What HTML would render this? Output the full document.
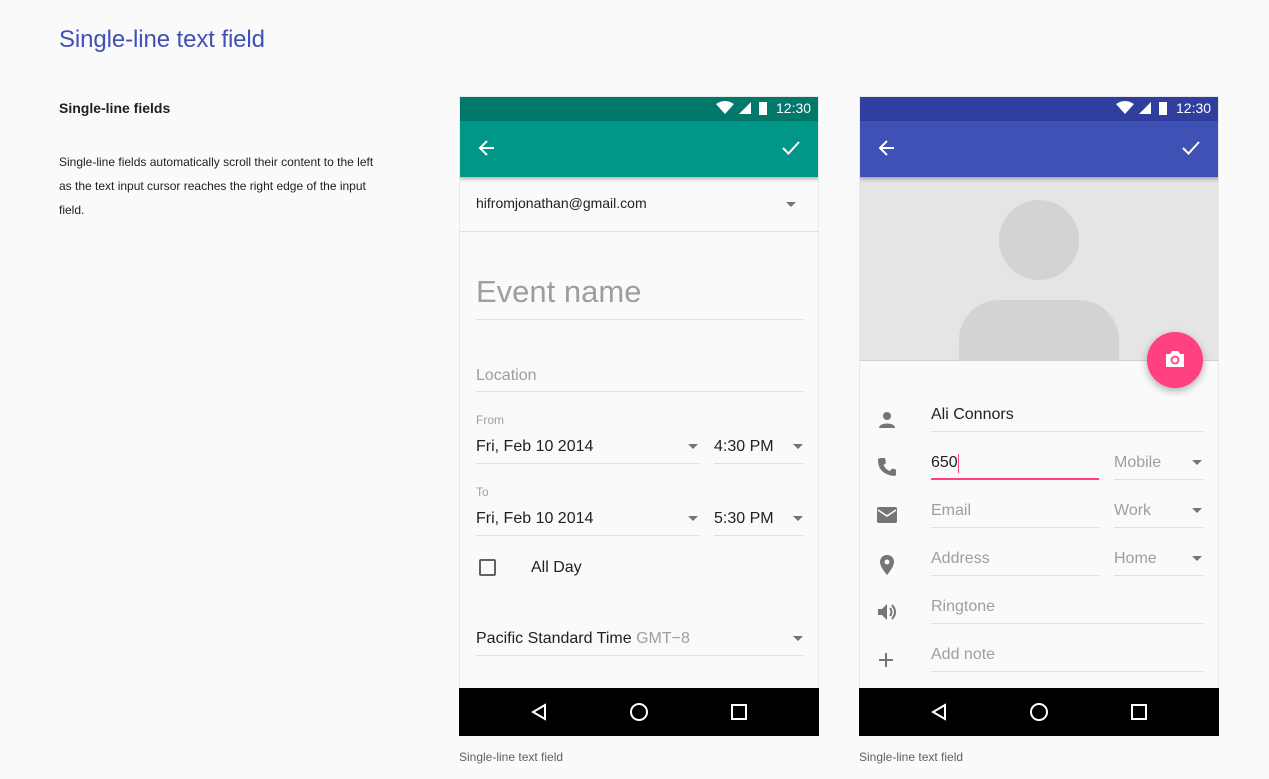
<!DOCTYPE html><html><head><meta charset="utf-8"><style>
*{margin:0;padding:0;box-sizing:border-box}
body{width:1269px;height:779px;background:#fafafa;font-family:"Liberation Sans",Roboto,sans-serif;position:relative;overflow:hidden}
.a{position:absolute}
.t{position:absolute;white-space:nowrap}
.ln{position:absolute;height:1px;background:#e0e0e0}
.g{color:#9e9e9e}
.k{color:#212121}
.dd{position:absolute;width:0;height:0;border-left:5px solid transparent;border-right:5px solid transparent;border-top:5px solid #757575}
</style></head><body>
<div class="t" style="left:59px;top:26px;font-size:24px;color:#3f51b5;letter-spacing:-0.1px">Single-line text field</div>
<div class="t" style="left:59px;top:100px;font-size:14px;font-weight:bold;color:#212121">Single-line fields</div>
<div class="a" style="left:59px;top:150px;width:330px;font-size:12px;line-height:24px;color:#212121">Single-line fields automatically scroll their content to the left as the text input cursor reaches the right edge of the input field.</div>

<div class="a" style="left:459px;top:96px;width:360px;height:640px;background:#fafafa;border:1px solid #e8e8e8;overflow:hidden">
<div class="a" style="left:-1px;top:-1px;width:362px;height:25px;background:#00796b"></div>
<div class="a" style="left:-1px;top:24px;width:362px;height:56px;background:#009688;box-shadow:0 2px 4px rgba(0,0,0,.3)"></div>
</div>
<div class="a" style="left:859px;top:96px;width:360px;height:640px;background:#fafafa;border:1px solid #e8e8e8;overflow:hidden">
<div class="a" style="left:-1px;top:-1px;width:362px;height:25px;background:#303f9f"></div>
<div class="a" style="left:-1px;top:80px;width:362px;height:184px;background:#e5e5e5;border-bottom:1px solid #d0d0d0"></div>
<div class="a" style="left:139px;top:103px;width:80px;height:80px;border-radius:50%;background:#d3d3d3"></div>
<div class="a" style="left:99px;top:203px;width:160px;height:80px;border-radius:40px 40px 0 0;background:#d3d3d3"></div>
<div class="a" style="left:-1px;top:264px;width:362px;height:330px;background:#fafafa"></div>
<div class="a" style="left:-1px;top:24px;width:362px;height:56px;background:#3f51b5;box-shadow:0 2px 4px rgba(0,0,0,.3)"></div>
</div>

<svg class="a" style="left:715px;top:100px" width="60" height="16"><path d="M1 4 Q10 -2 19 4 L10 14Z" fill="#fff"/><path d="M36 2 V14 H24Z" fill="#fff"/><rect x="44" y="2" width="8" height="13" fill="#fff"/></svg>
<div class="t" style="left:776px;top:100px;font-size:14px;color:#fff">12:30</div>
<svg class="a" style="left:1115px;top:100px" width="60" height="16"><path d="M1 4 Q10 -2 19 4 L10 14Z" fill="#fff"/><path d="M36 2 V14 H24Z" fill="#fff"/><rect x="44" y="2" width="8" height="13" fill="#fff"/></svg>
<div class="t" style="left:1176px;top:100px;font-size:14px;color:#fff">12:30</div>
<svg class="a" style="left:477px;top:138px" width="20" height="20"><path d="M17 10H3M10 3L3 10L10 17" stroke="#fff" stroke-width="2" fill="none"/></svg>
<svg class="a" style="left:781px;top:138px" width="20" height="20"><path d="M2 10L7.5 15.5L18 4" stroke="#fff" stroke-width="2" fill="none"/></svg>
<svg class="a" style="left:877px;top:138px" width="20" height="20"><path d="M17 10H3M10 3L3 10L10 17" stroke="#fff" stroke-width="2" fill="none"/></svg>
<svg class="a" style="left:1181px;top:138px" width="20" height="20"><path d="M2 10L7.5 15.5L18 4" stroke="#fff" stroke-width="2" fill="none"/></svg>

<div class="t k" style="left:476px;top:195px;font-size:14px">hifromjonathan@gmail.com</div>
<div class="dd" style="left:786px;top:202px"></div>
<div class="ln" style="left:460px;top:231px;width:358px"></div>
<div class="t" style="left:476px;top:274px;font-size:31px;color:#9e9e9e">Event name</div>
<div class="ln" style="left:476px;top:319px;width:327px"></div>
<div class="t g" style="left:476px;top:367px;font-size:16px">Location</div>
<div class="ln" style="left:476px;top:391px;width:327px"></div>
<div class="t g" style="left:476px;top:413px;font-size:12px">From</div>
<div class="t k" style="left:476px;top:438px;font-size:16px">Fri, Feb 10 2014</div>
<div class="dd" style="left:688px;top:444px"></div>
<div class="ln" style="left:476px;top:463px;width:223px"></div>
<div class="t k" style="left:714px;top:438px;font-size:16px">4:30 PM</div>
<div class="dd" style="left:793px;top:444px"></div>
<div class="ln" style="left:714px;top:463px;width:89px"></div>
<div class="t g" style="left:476px;top:485px;font-size:12px">To</div>
<div class="t k" style="left:476px;top:510px;font-size:16px">Fri, Feb 10 2014</div>
<div class="dd" style="left:688px;top:516px"></div>
<div class="ln" style="left:476px;top:535px;width:223px"></div>
<div class="t k" style="left:714px;top:510px;font-size:16px">5:30 PM</div>
<div class="dd" style="left:793px;top:516px"></div>
<div class="ln" style="left:714px;top:535px;width:89px"></div>
<div class="a" style="left:479px;top:559px;width:17px;height:17px;border:2px solid #616161;border-radius:2px"></div>
<div class="t k" style="left:531px;top:559px;font-size:16px">All Day</div>
<div class="t k" style="left:476px;top:630px;font-size:16px">Pacific Standard Time <span class="g">GMT−8</span></div>
<div class="dd" style="left:793px;top:636px"></div>
<div class="ln" style="left:476px;top:655px;width:327px"></div>

<div class="a" style="left:1147px;top:332px;width:56px;height:56px;border-radius:50%;background:#ff4081;box-shadow:0 3px 8px rgba(0,0,0,.3)"></div>
<svg class="a" style="left:1165px;top:350px" width="20" height="18"><path d="M1 4H5L7 1H13L15 4H19V17H1Z" fill="#fff"/><circle cx="10" cy="10" r="3.5" fill="none" stroke="#ff4081" stroke-width="1.8"/></svg>
<svg class="a" style="left:877px;top:410px" width="20" height="20"><circle cx="10" cy="6" r="4" fill="#757575"/><path d="M2 18C2 12 18 12 18 18Z" fill="#757575"/></svg>
<div class="t k" style="left:931px;top:406px;font-size:16px">Ali Connors</div>
<div class="ln" style="left:931px;top:431px;width:272px"></div>
<svg class="a" style="left:877px;top:457px" width="20" height="20"><path d="M4 1L8 1L9 6L6.5 8Q9 13 13 14L15 11.5L19 12.5V17Q19 19 17 19Q1 17 1 3Q1 1 4 1Z" fill="#757575"/></svg>
<div class="t k" style="left:931px;top:454px;font-size:16px">650</div>
<div class="a" style="left:958px;top:454px;width:1px;height:19px;background:#ff4081"></div>
<div class="a" style="left:931px;top:478px;width:168px;height:2px;background:#ff4081"></div>
<div class="t g" style="left:1114px;top:454px;font-size:16px">Mobile</div>
<div class="dd" style="left:1192px;top:460px"></div>
<div class="ln" style="left:1114px;top:479px;width:89px"></div>
<svg class="a" style="left:876px;top:506px" width="22" height="18"><rect x="1" y="1" width="20" height="16" rx="2" fill="#757575"/><path d="M2 4L11 10L20 4" stroke="#fafafa" stroke-width="1.6" fill="none"/></svg>
<div class="t g" style="left:931px;top:502px;font-size:16px">Email</div>
<div class="ln" style="left:931px;top:527px;width:168px"></div>
<div class="t g" style="left:1114px;top:502px;font-size:16px">Work</div>
<div class="dd" style="left:1192px;top:508px"></div>
<div class="ln" style="left:1114px;top:527px;width:89px"></div>
<svg class="a" style="left:879px;top:554px" width="16" height="22"><path d="M8 1C4 1 1 4 1 8C1 13 8 21 8 21C8 21 15 13 15 8C15 4 12 1 8 1Z" fill="#757575"/><circle cx="8" cy="8" r="2.5" fill="#fafafa"/></svg>
<div class="t g" style="left:931px;top:550px;font-size:16px">Address</div>
<div class="ln" style="left:931px;top:575px;width:168px"></div>
<div class="t g" style="left:1114px;top:550px;font-size:16px">Home</div>
<div class="dd" style="left:1192px;top:556px"></div>
<div class="ln" style="left:1114px;top:575px;width:89px"></div>
<svg class="a" style="left:877px;top:603px" width="22" height="18"><path d="M1 6H5L10 1V17L5 12H1Z" fill="#757575"/><path d="M13 5Q16 9 13 13M15 2Q21 9 15 16" stroke="#757575" stroke-width="2" fill="none"/></svg>
<div class="t g" style="left:931px;top:598px;font-size:16px">Ringtone</div>
<div class="ln" style="left:931px;top:623px;width:272px"></div>
<svg class="a" style="left:878px;top:652px" width="16" height="16"><path d="M8 1V15M1 8H15" stroke="#757575" stroke-width="2"/></svg>
<div class="t g" style="left:931px;top:646px;font-size:16px">Add note</div>
<div class="ln" style="left:931px;top:671px;width:272px"></div>

<div class="a" style="left:459px;top:688px;width:360px;height:48px;background:#000"></div>
<div class="a" style="left:859px;top:688px;width:360px;height:48px;background:#000"></div>
<svg class="a" style="left:459px;top:688px" width="360" height="48"><path d="M86 17L74 24L86 31Z" stroke="#fff" stroke-width="2" fill="none"/><circle cx="180" cy="24" r="8" stroke="#fff" stroke-width="2" fill="none"/><rect x="273" y="17" width="14" height="14" stroke="#fff" stroke-width="2" fill="none"/></svg>
<svg class="a" style="left:859px;top:688px" width="360" height="48"><path d="M86 17L74 24L86 31Z" stroke="#fff" stroke-width="2" fill="none"/><circle cx="180" cy="24" r="8" stroke="#fff" stroke-width="2" fill="none"/><rect x="273" y="17" width="14" height="14" stroke="#fff" stroke-width="2" fill="none"/></svg>

<div class="t" style="left:459px;top:750px;font-size:12px;color:#616161">Single-line text field</div>
<div class="t" style="left:859px;top:750px;font-size:12px;color:#616161">Single-line text field</div>
</body></html>
